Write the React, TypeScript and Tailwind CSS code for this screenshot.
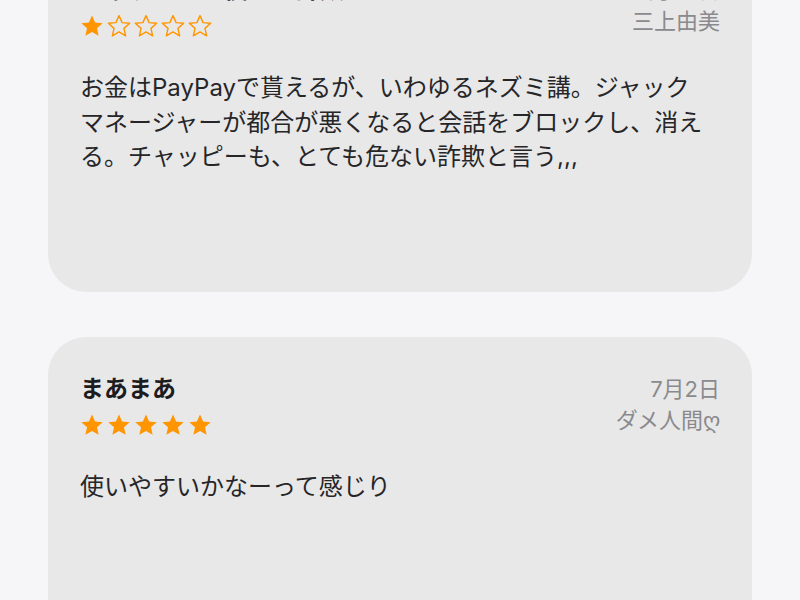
import React from "react";

const Star = ({ filled }: { filled: boolean }) => (
  <svg width="24" height="24" viewBox="0 0 24 24" className="shrink-0">
    <path
      d="M12 1.6l3.1 7 7.6.7-5.75 5.05 1.7 7.45L12 17.9l-6.65 3.9 1.7-7.45L1.3 9.3l7.6-.7z"
      fill={filled ? "#ff9500" : "none"}
      stroke="#ff9500"
      strokeWidth={filled ? 0 : 1.4}
      strokeLinejoin="round"
    />
  </svg>
);

const Stars = ({ n }: { n: number }) => (
  <div className="flex gap-[3px] mt-[9px] h-[24px] items-center">
    {[0, 1, 2, 3, 4].map((i) => (
      <Star key={i} filled={i < n} />
    ))}
  </div>
);

type Review = {
  title: string;
  date: string;
  author: string;
  rating: number;
  lines: string[];
};

const reviews: Review[] = [
  {
    title: "チャッピーを使った詐欺!",
    date: "6月28日",
    author: "三上由美",
    rating: 1,
    lines: [
      "お金はPayPayで貰えるが、いわゆるネズミ講。ジャック",
      "マネージャーが都合が悪くなると会話をブロックし、消え",
      "る。チャッピーも、とても危ない詐欺と言う,,,",
    ],
  },
  {
    title: "まあまあ",
    date: "7月2日",
    author: "ダメ人間ღ",
    rating: 5,
    lines: ["使いやすいかなーって感じり"],
  },
];

const Card = ({ r }: { r: Review }) => (
  <div className="bg-[#e8e8e8] rounded-[38px] h-[354px] px-[32px] pt-[37px]">
    <div className="flex justify-between items-start">
      <div className="flex flex-col">
        <div className="text-[24px] leading-[30px] font-bold text-[#1c1c1e] whitespace-nowrap">
          {r.title}
        </div>
        <Stars n={r.rating} />
      </div>
      <div className="flex flex-col items-end text-[22px] leading-[31px] text-[#8a8a8e] whitespace-nowrap">
        <div>{r.date}</div>
        <div>{r.author}</div>
      </div>
    </div>
    <div className="mt-[33px] text-[24px] leading-[34.5px] text-[#262628] whitespace-nowrap">
      {r.lines.map((l, i) => (
        <div key={i}>{l}</div>
      ))}
    </div>
  </div>
);

export default function App() {
  return (
    <div
      className="w-[800px] h-[600px] overflow-hidden bg-[#f6f6f8]"
      style={{ fontFamily: 'Inter, "Noto Sans CJK JP", sans-serif' }}
    >
      <div className="mt-[-62px] px-[48px] flex flex-col gap-[45px]">
        {reviews.map((r, i) => (
          <Card key={i} r={r} />
        ))}
      </div>
    </div>
  );
}
